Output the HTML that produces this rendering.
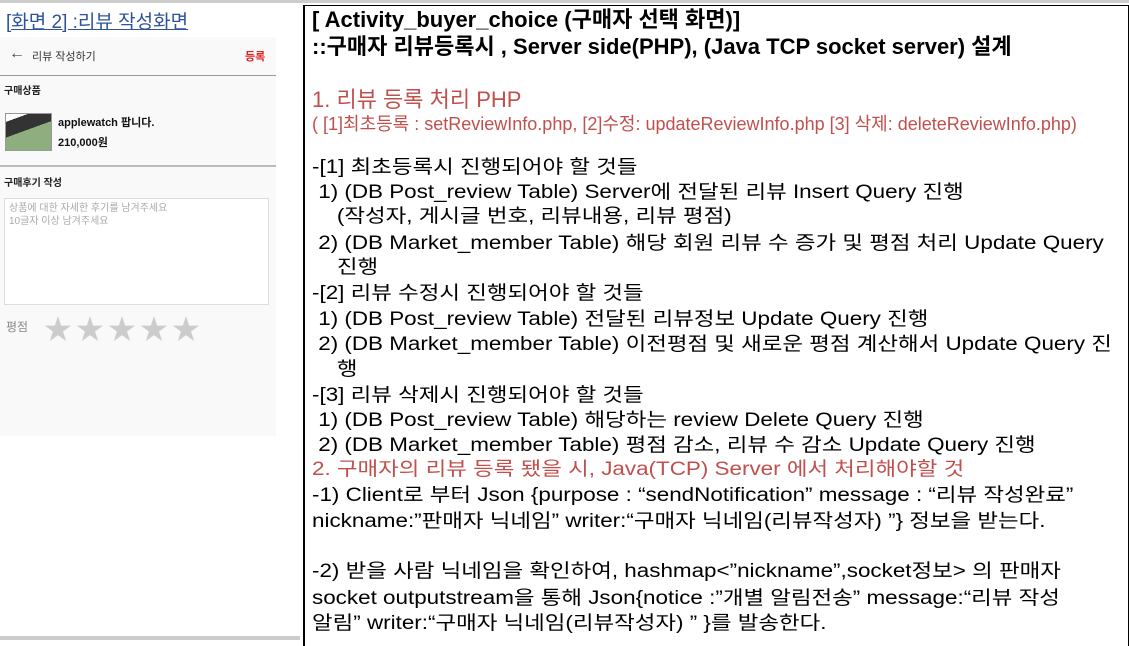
<!DOCTYPE html>
<html><head><meta charset="utf-8"><style>
body{margin:0;width:1129px;height:640px;background:#fff;position:relative;overflow:hidden;font-family:"Liberation Sans","Noto Sans CJK KR",sans-serif;}
.a{position:absolute;white-space:nowrap;}
#box{position:absolute;left:303px;top:5px;width:823px;height:640px;border-left:2px solid #000;border-top:1px solid #000;border-right:2px solid #000;}
.l{position:absolute;left:312px;white-space:nowrap;font-size:19px;color:#000;line-height:22px;transform:scaleX(1.18);transform-origin:left;}
.h{transform:none;font-weight:bold;font-size:22px;}
.r{color:#c0504d;}
</style></head><body>
<div style="position:absolute;left:0;top:0;width:1129px;height:3px;background:#ccc"></div>
<div class="a" style="left:6px;top:7px;font-size:19px;color:#2f5496;text-decoration:underline">[화면 2] :리뷰 작성화면</div>
<div style="position:absolute;left:0;top:37px;width:276px;height:399px;background:#f9f9f9"></div>
<div class="a" style="left:9px;top:45px;font-size:16px;color:#444">←</div>
<div class="a" style="left:32px;top:48px;font-size:11px;color:#333">리뷰 작성하기</div>
<div class="a" style="left:245px;top:48px;font-size:11px;color:#d22;font-weight:bold">등록</div>
<div style="position:absolute;left:0;top:75px;width:276px;height:1px;background:#999"></div>
<div class="a" style="left:4px;top:82px;font-size:10px;font-weight:bold;color:#222">구매상품</div>
<div style="position:absolute;left:5px;top:113px;width:45px;height:36px;border:1px solid #999;background:linear-gradient(160deg,#fff 0 15%,#333 15% 45%,#8fae7f 45%)"></div>
<div class="a" style="left:58px;top:114px;font-size:11px;font-weight:bold;color:#111">applewatch 팝니다.</div>
<div class="a" style="left:58px;top:134px;font-size:11px;font-weight:bold;color:#111">210,000원</div>
<div style="position:absolute;left:0;top:165px;width:276px;height:2px;background:#bbb"></div>
<div class="a" style="left:4px;top:174px;font-size:10px;font-weight:bold;color:#222">구매후기 작성</div>
<div style="position:absolute;left:4px;top:198px;width:263px;height:105px;border:1px solid #ddd;background:#fff"></div>
<div class="a" style="left:9px;top:202px;font-size:10px;color:#aaa;line-height:13px">상품에 대한 자세한 후기를 남겨주세요<br>10글자 이상 남겨주세요</div>
<div class="a" style="left:6px;top:318px;font-size:12px;color:#888">평점</div>
<div class="a" style="left:44px;top:308px;font-size:28px;color:#ccc;letter-spacing:4px">★★★★★</div>
<div style="position:absolute;left:0;top:636px;width:300px;height:4px;background:#ccc"></div>
<div id="box"></div>
<div class="l h" style="top:9px">[ Activity_buyer_choice (구매자 선택 화면)]</div>
<div class="l h" style="top:36px">::구매자 리뷰등록시 , Server side(PHP), (Java TCP socket server) 설계</div>
<div class="l r" style="top:89px;font-size:22px;transform:none">1. 리뷰 등록 처리  PHP</div>
<div class="l r" style="top:113px;font-size:18px;transform:none">(  [1]최초등록 : setReviewInfo.php, [2]수정: updateReviewInfo.php [3] 삭제: deleteReviewInfo.php)</div>
<div class="l" style="top:157px">-[1] 최초등록시 진행되어야 할 것들</div>
<div class="l" style="top:182px">&nbsp;1) (DB Post_review Table) Server에 전달된 리뷰 Insert Query  진행</div>
<div class="l" style="top:206px">&nbsp;&nbsp;&nbsp;&nbsp;(작성자, 게시글 번호, 리뷰내용, 리뷰 평점)</div>
<div class="l" style="top:233px">&nbsp;2) (DB Market_member Table) 해당 회원 리뷰 수 증가 및 평점 처리 Update Query</div>
<div class="l" style="top:257px">&nbsp;&nbsp;&nbsp;&nbsp;진행</div>
<div class="l" style="top:283px">-[2] 리뷰 수정시 진행되어야 할 것들</div>
<div class="l" style="top:309px">&nbsp;1) (DB Post_review Table)  전달된 리뷰정보 Update Query 진행</div>
<div class="l" style="top:334px">&nbsp;2) (DB Market_member Table) 이전평점 및 새로운 평점 계산해서 Update Query 진</div>
<div class="l" style="top:359px">&nbsp;&nbsp;&nbsp;&nbsp;행</div>
<div class="l" style="top:385px">-[3] 리뷰 삭제시 진행되어야 할 것들</div>
<div class="l" style="top:410px">&nbsp;1) (DB Post_review Table) 해당하는 review Delete Query 진행</div>
<div class="l" style="top:435px">&nbsp;2) (DB Market_member Table) 평점 감소, 리뷰 수 감소 Update Query 진행</div>
<div class="l r" style="top:459px">2. 구매자의 리뷰 등록 됐을 시,  Java(TCP) Server 에서 처리해야할 것</div>
<div class="l" style="top:485px">-1) Client로 부터 Json {purpose : “sendNotification” message : “리뷰 작성완료”</div>
<div class="l" style="top:511px">nickname:”판매자 닉네임” writer:“구매자 닉네임(리뷰작성자) ”}  정보을 받는다.</div>
<div class="l" style="top:561px">-2) 받을 사람 닉네임을 확인하여, hashmap&lt;”nickname”,socket정보&gt; 의 판매자</div>
<div class="l" style="top:588px">socket outputstream을 통해  Json{notice :”개별 알림전송” message:“리뷰 작성</div>
<div class="l" style="top:613px">알림” writer:“구매자 닉네임(리뷰작성자) ” }를 발송한다.</div>
</body></html>
